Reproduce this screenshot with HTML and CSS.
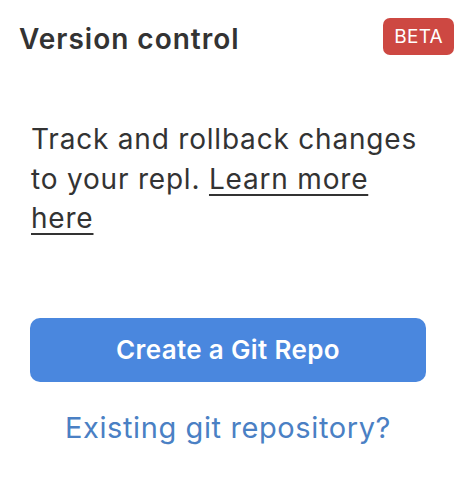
FILE: index.html
```html
<!DOCTYPE html>
<html>
<head>
<meta charset="utf-8">
<link rel="stylesheet" href="styles.css">
</head>
<body>
<div class="panel">
  <div class="header">
    <div class="title">Version control</div>
    <div class="badge">BETA</div>
  </div>
  <p class="desc">Track and rollback changes to your repl. <a class="learn" href="#">Learn more here</a></p>
  <button class="create">Create a Git Repo</button>
  <a class="existing" href="#">Existing git repository?</a>
</div>
</body>
</html>
```
FILE: styles.css
```css
html, body {
  margin: 0;
  padding: 0;
  background: #ffffff;
}
.panel {
  width: 466px;
  height: 480px;
  font-family: Inter, "Noto Sans", sans-serif;
  color: #333333;
  display: flex;
  flex-direction: column;
}
.header {
  display: flex;
  justify-content: space-between;
  align-items: flex-start;
  padding: 18px 12px 0 19px;
}
.title {
  font-size: 28px;
  font-weight: 600;
  line-height: 43px;
  letter-spacing: 1px;
}
.badge {
  background: #cd4842;
  color: #ffffff;
  font-size: 19px;
  line-height: 37px;
  height: 37px;
  padding: 0 11px;
  border-radius: 7px;
  letter-spacing: 0.3px;
}
.desc {
  margin: 59px 0 0 0;
  padding: 0 45px 0 31px;
  font-size: 28px;
  line-height: 39.5px;
  letter-spacing: 0.8px;
}
.learn {
  color: #333333;
  text-decoration: underline;
  text-decoration-thickness: 2px;
  text-underline-offset: 5px;
}
.create {
  margin: 79px 40px 0 30px;
  height: 64px;
  border: none;
  border-radius: 10px;
  background: #4a87de;
  color: #ffffff;
  font-family: Inter, "Noto Sans", sans-serif;
  font-size: 26px;
  font-weight: 600;
  letter-spacing: 0.35px;
  display: flex;
  align-items: center;
  justify-content: center;
}
.existing {
  margin-top: 26px;
  align-self: center;
  margin-left: -10px;
  font-size: 29px;
  line-height: 40px;
  letter-spacing: 0.6px;
  color: #4a80c4;
  text-decoration: none;
}
```
